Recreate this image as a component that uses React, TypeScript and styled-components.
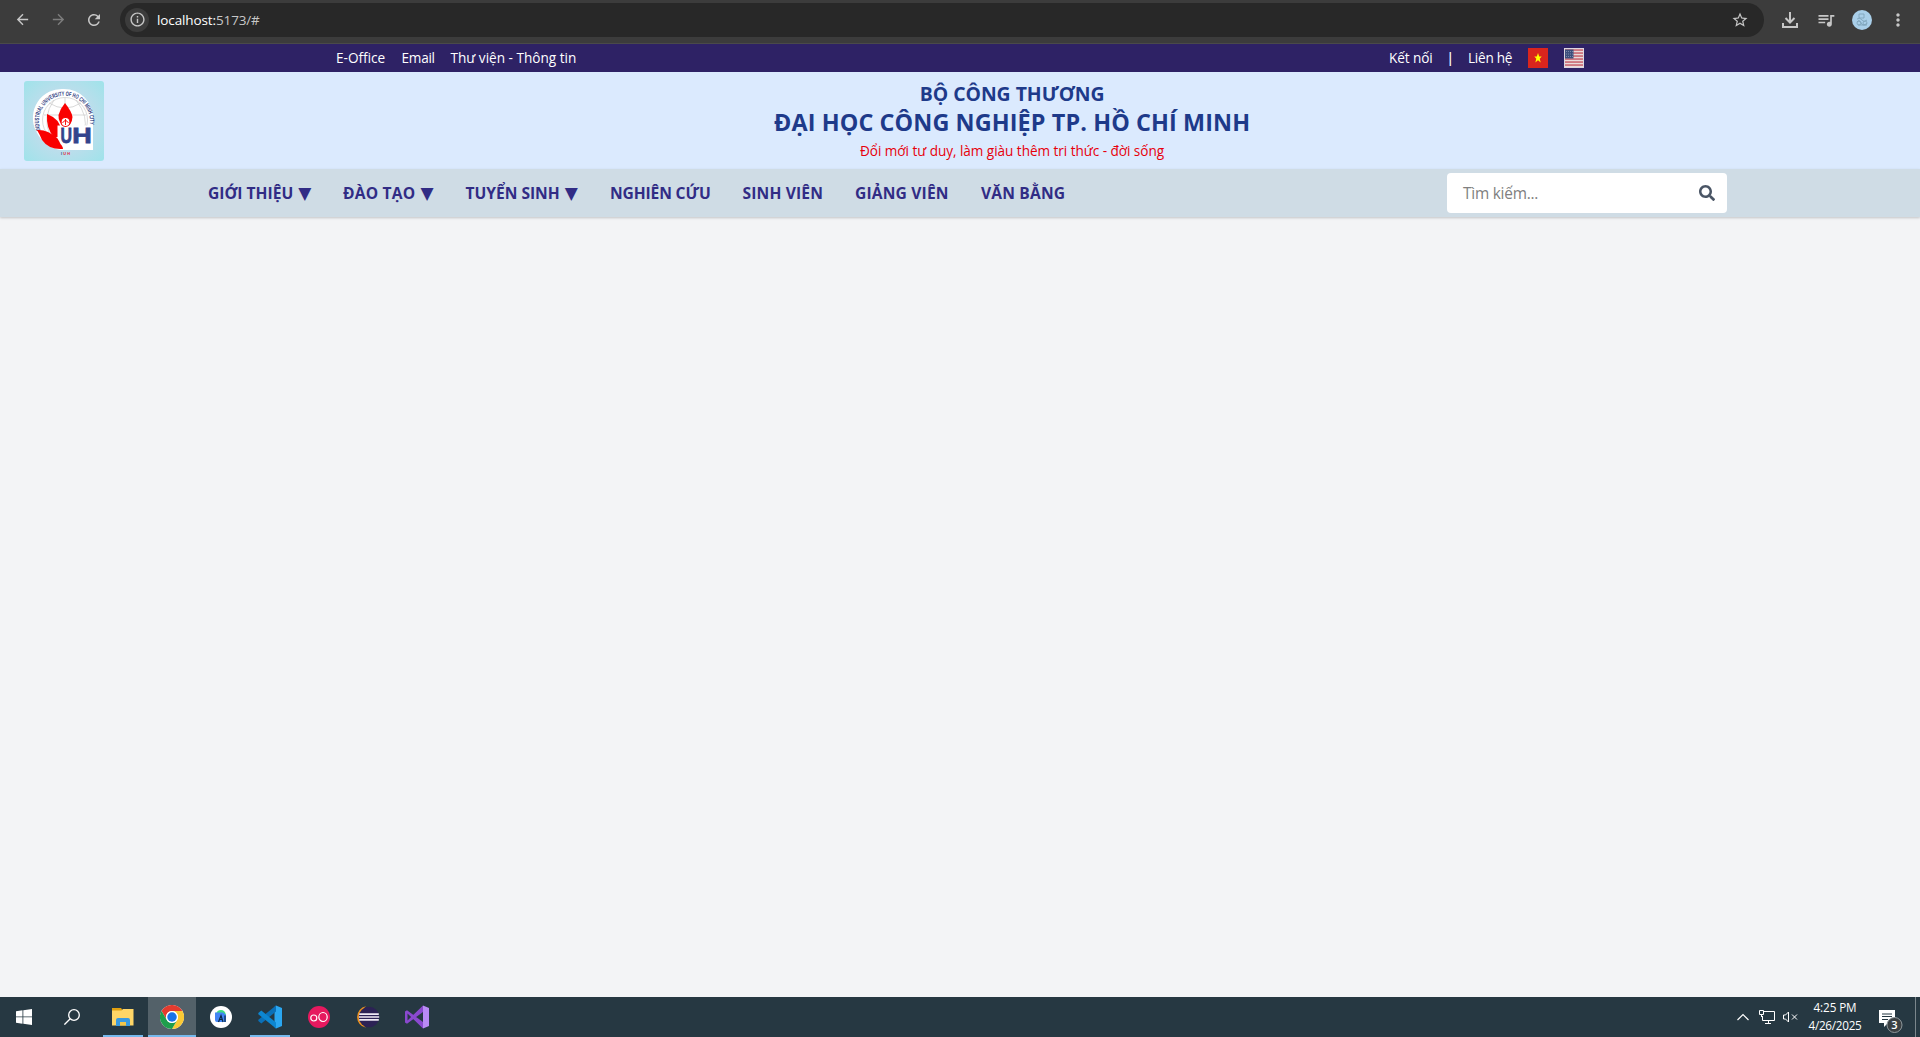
import React from 'react';
import styled, { createGlobalStyle, css } from 'styled-components';
import { MdArrowBack, MdArrowForward, MdRefresh, MdInfoOutline, MdStarOutline, MdQueueMusic, MdMoreVert } from 'react-icons/md';
import { FaSearch } from 'react-icons/fa';

const Global = createGlobalStyle`
  *, *::before, *::after { box-sizing: border-box; }
  body { margin: 0; background: #f3f4f6; font-family: "Open Sans", "Noto Sans", "DejaVu Sans", sans-serif; }
  svg { display: block; flex: none; }
  a { color: inherit; text-decoration: none; }
`;

const Screen = styled.div`
  display: flex;
  flex-direction: column;
  width: 1920px;
  height: 1037px;
  overflow: hidden;
`;

/* fixed-width text whose tracking is tuned per label */
const fitted = css<{ $w: number; $track?: number }>`
  display: block;
  width: ${p => p.$w}px;
  letter-spacing: ${p => p.$track ?? 0}px;
  white-space: nowrap;
`;

/* ---------- browser toolbar ---------- */
const Toolbar = styled.div`
  display: flex;
  align-items: center;
  height: 44px;
  flex: none;
  padding: 0 10px 4px 12px;
  background: #3c3c3c;
  border-bottom: 1px solid #4a4a4a;
  color: #c7c7c7;
`;
const ToolButton = styled.span<{ $dim?: boolean; $gap?: number }>`
  display: flex;
  align-items: center;
  justify-content: center;
  width: 20px;
  height: 20px;
  margin-right: ${p => p.$gap ?? 16}px;
  color: ${p => (p.$dim ? '#7d7d7d' : '#c7c7c7')};
`;
const AddressBar = styled.div`
  display: flex;
  align-items: center;
  width: 1644px;
  height: 34px;
  margin-right: 16px;
  padding: 0 14px 0 5px;
  border-radius: 17px;
  background: #282828;
`;
const SiteInfo = styled.span`
  display: flex;
  align-items: center;
  justify-content: center;
  width: 24px;
  height: 24px;
  border-radius: 12px;
  background: #3c3c3c;
`;
const Url = styled.div`
  display: flex;
  flex: 1;
  margin-left: 8px;
  font-size: 13.5px;
  line-height: 20px;
`;
const UrlPart = styled.span<{ $w: number; $track?: number; $muted?: boolean }>`
  ${fitted}
  color: ${p => (p.$muted ? '#c7c7c7' : '#ffffff')};
`;

/* ---------- site top bar ---------- */
const TopBar = styled.div`
  display: flex;
  justify-content: center;
  flex: none;
  height: 28px;
  background: #2e2265;
`;
const TopInner = styled.div`
  display: flex;
  align-items: center;
  justify-content: space-between;
  width: 1280px;
  padding: 0 16px;
`;
const TopGroup = styled.div`
  display: flex;
  align-items: center;
  gap: 16px;
`;
const TopLink = styled.a<{ $w: number; $track?: number }>`
  ${fitted}
  color: #ffffff;
  font-size: 13.6px;
  line-height: 20px;
`;
const Divider = styled(TopLink)`
  display: flex;
  justify-content: center;
  font-weight: 600;
`;

/* ---------- masthead ---------- */
const Masthead = styled.header`
  display: flex;
  flex: none;
  height: 97px;
  padding: 9px 0 8px 24px;
  background: #dbeafe;
`;
const Titles = styled.div`
  display: flex;
  flex: 1;
  flex-direction: column;
  align-items: center;
`;
const Ministry = styled.h2<{ $w: number; $track?: number }>`
  ${fitted}
  margin: 0;
  color: #1e3a8a;
  font-size: 19.4px;
  font-weight: 700;
  line-height: 26px;
`;
const School = styled.h1<{ $w: number; $track?: number }>`
  ${fitted}
  margin: 0;
  color: #1e3a8a;
  font-size: 23.4px;
  font-weight: 700;
  line-height: 30px;
`;
const Slogan = styled.p<{ $w: number; $track?: number }>`
  ${fitted}
  margin: 4px 0 0;
  color: #e7000b;
  font-size: 13.6px;
  line-height: 20px;
`;

/* ---------- navigation ---------- */
const NavBar = styled.nav`
  display: flex;
  justify-content: center;
  flex: none;
  position: relative;
  height: 48px;
  background: #cfdce5;
  box-shadow: 0 1px 3px rgba(0, 0, 0, 0.1), 0 1px 2px rgba(0, 0, 0, 0.1);
`;
const NavInner = styled.div`
  display: flex;
  align-items: center;
  justify-content: space-between;
  width: 1536px;
  padding: 0 1px 0 16px;
`;
const Menu = styled.div`
  display: flex;
  gap: 32px;
`;
const MenuLink = styled.a<{ $w: number; $track?: number }>`
  ${fitted}
  height: 24px;
  color: #312c85;
  font-size: 15.6px;
  font-weight: 700;
  line-height: 24px;
`;
const Arrow = styled.span`
  margin-left: 1px;
  font-size: 17px;
  line-height: 1;
  letter-spacing: 0;
`;
const SearchBox = styled.div`
  display: flex;
  align-items: center;
  justify-content: space-between;
  width: 280px;
  height: 40px;
  padding: 0 12px 0 16px;
  border-radius: 4px;
  background: #ffffff;
  color: #4a5565;
`;
const Placeholder = styled.span<{ $w: number; $track?: number }>`
  ${fitted}
  padding-top: 2px;
  color: #808080;
  font-size: 15.4px;
  line-height: 24px;
`;

const Page = styled.main`
  flex: 1;
  background: #f3f4f6;
`;

/* ---------- taskbar ---------- */
const Taskbar = styled.footer`
  display: flex;
  flex: none;
  height: 40px;
  background: #263842;
`;
const TaskButton = styled.span<{ $active?: boolean; $open?: boolean; $gap?: number }>`
  display: flex;
  align-items: center;
  justify-content: center;
  width: 48px;
  height: 40px;
  margin-right: ${p => p.$gap ?? 1}px;
  background: ${p =>
    p.$active
      ? 'linear-gradient(#76b9ed, #76b9ed) bottom / 48px 2px no-repeat, #536169'
      : p.$open
      ? 'linear-gradient(#76b9ed, #76b9ed) bottom / 40px 2px no-repeat'
      : 'none'};
`;
const Tray = styled.div`
  display: flex;
  align-items: center;
  margin-left: auto;
  color: #ffffff;
`;
const TrayIcon = styled.span<{ $gap: number; $drop?: number }>`
  display: flex;
  margin-top: ${p => p.$drop ?? 0}px;
  margin-right: ${p => p.$gap}px;
`;
const Clock = styled.div`
  display: flex;
  flex-direction: column;
  align-items: center;
  width: 54px;
  margin: -2px 17px 0 0;
`;
const ClockLine = styled.span<{ $w: number; $track?: number }>`
  ${fitted}
  color: #ffffff;
  font-size: 11.7px;
  line-height: 18px;
`;
const DesktopEdge = styled.span`
  width: 5px;
  height: 40px;
  border-left: 1px solid #7b868c;
`;

const menu = [
  { text: 'GIỚI THIỆU', w: 103, track: 0, drop: true },
  { text: 'ĐÀO TẠO', w: 90.5, track: 0.18, drop: true },
  { text: 'TUYỂN SINH', w: 112.5, track: -0.02, drop: true },
  { text: 'NGHIÊN CỨU', w: 100.5, track: -0.13 },
  { text: 'SINH VIÊN', w: 80.5, track: 0.15 },
  { text: 'GIẢNG VIÊN', w: 94, track: 0.17 },
  { text: 'VĂN BẰNG', w: 84, track: 0.17 },
];

const UniversityLogo = () => (
  <svg width="80" height="80" viewBox="0 0 80 80">
    <defs>
      <radialGradient id="sky" cx="0.5" cy="0.5" r="0.7">
        <stop offset="0.4" stopColor="#c4dcec" />
        <stop offset="1" stopColor="#9fe3ea" />
      </radialGradient>
      <path id="ring" d="M16.5 49 A25.5 25.5 0 1 1 65.5 45" />
    </defs>
    <rect width="80" height="80" rx="3" fill="url(#sky)" />
    <path d="M40 8 A29 29 0 0 1 69 38 V69 H36 Q20 66 12 50 A29 29 0 0 1 40 8Z" fill="#fff" />
    <g fill="none" stroke="#c9c9c9" strokeWidth="0.7">
      <circle cx="41" cy="39" r="22.5" />
      <path d="M41 17V39M20 34H62M25 22Q41 32 57 22M30 19Q18 36 26 54M52 19Q65 36 60 50" />
    </g>
    <text fontFamily="Liberation Sans, Arial, sans-serif" fontSize="6.2" fontWeight="700" fill="#30407f" textLength="92" lengthAdjust="spacingAndGlyphs">
      <textPath href="#ring" textLength="92" lengthAdjust="spacingAndGlyphs">INDUSTRIAL UNIVERSITY OF HO CHI MINH CITY</textPath>
    </text>
    <path d="M41 22Q48 31 48.500 36Q48 44 41.500 46Q34 42 34.500 34Q36 28 41 22Z" fill="#f90000" />
    <path d="M23 33Q36 38 37 49Q36 58 30 56Q22 48 23 33Z" fill="#f90000" />
    <path d="M13 49Q23 48 33 57L38 62L39 68Q25 69 18 59Q16 54 13 49Z" fill="#f90000" />
    <path d="M33.500 44.500H69V69H42Q35 63 33.500 56Z" fill="#fff" />
    <circle cx="41.500" cy="41" r="4.500" fill="#fff" stroke="#f90000" strokeWidth="1.200" />
    <path d="M38.500 42Q41.500 37 44.500 42M41.500 38V44" fill="none" stroke="#f90000" strokeWidth="0.900" />
    <g fontFamily="Liberation Sans, Arial, sans-serif" fontSize="22.500" fontWeight="700" fill="#34438c" stroke="#34438c" strokeWidth="0.800">
      <text x="36.500" y="62.300" textLength="11.500" lengthAdjust="spacingAndGlyphs">U</text>
      <text x="48.200" y="62.300" textLength="19.500" lengthAdjust="spacingAndGlyphs">H</text>
    </g>
    <text x="37" y="74" fontFamily="Liberation Sans, Arial, sans-serif" fontSize="3.800" fontWeight="700" fill="#e02038" textLength="9"><tspan fill="#34438c">I</tspan>UH</text>
  </svg>
);

const VietnamFlag = () => (
  <svg width="20" height="20" viewBox="0 0 20 20">
    <rect width="20" height="20" fill="#da251d" />
    <path d="M10 5l1.200 3.600h2.500l-2 2.200 1 3.700-2.700-2.200-2.700 2.200 1-3.700-2-2.200h2.500z" fill="#ff0" />
  </svg>
);

const UsaFlag = () => (
  <svg width="20" height="20" viewBox="0 0 20 20">
    <rect width="20" height="20" fill="#eadada" />
    {[1, 4, 7, 10, 13, 16].map(y => (
      <rect key={y} x="1" y={y + 0.3} width="18.500" height="1.500" fill="#c8606c" />
    ))}
    <rect x="1" y="1.500" width="8.500" height="9" fill="#3d4f7c" />
    <path d="M2 3.500H9M2 6H9M2 8.500H9" stroke="#8b97b5" strokeWidth="0.800" strokeDasharray="1 1" />
    <rect x="0.500" y="0.500" width="19" height="19" fill="none" stroke="#ddd6df" />
  </svg>
);

const DownloadIcon = () => (
  <svg width="16" height="16" viewBox="0 0 16 16" fill="none" stroke="currentColor" strokeWidth="2">
    <path d="M8 0V10M3.500 6L8 10.500L12.500 6M1 11V15H15V11" />
  </svg>
);

const Avatar = () => (
  <svg width="20" height="20" viewBox="0 0 20 20">
    <circle cx="10" cy="10" r="10" fill="#a9cfe9" />
    <g fill="none" stroke="#7fa5bb" strokeWidth="0.900">
      <path d="M7 4H12V8H7ZM5 9Q8 7 10 10T15 10M5 12Q7 9 9 13T15 13M6 15H15" />
      <circle cx="7" cy="13" r="2" />
      <circle cx="13" cy="13" r="2" />
    </g>
  </svg>
);

const StartIcon = () => (
  <svg width="16" height="16" viewBox="0 0 16 16" fill="#fff">
    <path d="M0 2.200L6.500 1.300V7.500H0ZM7.300 1.200L16 0V7.500H7.300ZM0 8.300H6.500V14.700L0 13.800ZM7.300 8.300H16V16L7.300 14.800Z" />
  </svg>
);

const FindIcon = () => (
  <svg width="16" height="16" viewBox="0 0 16 16" fill="none" stroke="#fff" strokeWidth="1.300">
    <circle cx="10" cy="6" r="5.300" />
    <path d="M6.200 9.800L0.400 15.600" />
  </svg>
);

const FolderIcon = () => (
  <svg width="22" height="20" viewBox="0 0 22 20">
    <path d="M0 1H9L10.500 3V5H0Z" fill="#e0a010" />
    <path d="M0 3.500H9.500L11 2H21.500V18.500H0Z" fill="#ffd667" />
    <path d="M4 19V13Q4 11 6 11H16Q18 11 18 13V19H14V15H8V19Z" fill="#3a9ae0" />
    <path d="M8 15H14V18.500H8Z" fill="#f3c64b" />
  </svg>
);

const ChromeIcon = () => (
  <svg width="24" height="24" viewBox="0 0 48 48">
    <circle cx="24" cy="24" r="24" fill="#fff" />
    <path d="M3.200 12A24 24 0 0 1 44.800 12H24A12 12 0 0 0 13.600 30Z" fill="#e33b2e" />
    <path d="M44.800 12A24 24 0 0 1 24 48L34.400 30A12 12 0 0 0 24 12Z" fill="#fcc934" />
    <path d="M24 48A24 24 0 0 1 3.200 12L13.600 30A12 12 0 0 0 34.400 30Z" fill="#1e9e4c" />
    <circle cx="24" cy="24" r="12" fill="#fff" />
    <circle cx="24" cy="24" r="9.500" fill="#1a73e8" />
  </svg>
);

const StudioIcon = () => (
  <svg width="22" height="22" viewBox="0 0 22 22">
    <circle cx="11" cy="11" r="11" fill="#fff" />
    <path d="M6 8Q7 4 11 4Q15 4 16 9H9Z" fill="#3ddc84" />
    <path d="M5 6.500H13L16 9V16H7Q5 16 5 14Z" fill="#4285f4" />
    <path d="M8.500 16L11 9.500L13 16M9.500 13.500H12.500M15 9.500V16" stroke="#0b2b45" strokeWidth="1.200" fill="none" />
  </svg>
);

const CodeIcon = () => (
  <svg width="24" height="24" viewBox="0 0 24 24">
    <path d="M18 0.500L24 3V21L18 23.500L16.500 22V2Z" fill="#2aa7f2" />
    <path d="M18 0.500V6.500L3.300 18.500L0.300 16V14.800Z" fill="#0a70b8" />
    <path d="M18 23.500V17.500L3.300 5.500L0.300 8V9.200Z" fill="#0d86d1" />
  </svg>
);

const CircleAppIcon = () => (
  <svg width="22" height="22" viewBox="0 0 22 22">
    <circle cx="11" cy="11" r="11" fill="#e6195f" />
    <g fill="none" stroke="#fff" strokeWidth="1.200">
      <circle cx="5.800" cy="12" r="3" />
      <ellipse cx="15" cy="11" rx="4.200" ry="4.500" />
    </g>
  </svg>
);

const EclipseIcon = () => (
  <svg width="24" height="22" viewBox="0 0 24 22">
    <path d="M10 0.200A11 11 0 0 0 10 21.800Q5 18 5 11Q5 4 10 0.200Z" fill="#f0941e" />
    <circle cx="13" cy="11" r="10.300" fill="#2c2255" />
    <path d="M3.200 8.200H22.800M2.800 11H23.200M3.200 13.800H22.800" stroke="#efeaf5" strokeWidth="1.700" />
  </svg>
);

const VisualStudioIcon = () => (
  <svg width="24" height="24" viewBox="0 0 24 24">
    <path d="M0 6.500L2 5.300L18 17V23.500L2.500 8.500V15.500L18 0.500V7L2 18.700L0 17.500Z" fill="#8a49cf" />
    <path d="M18 0.500L24 3V21L18 23.500Z" fill="#b98af5" />
  </svg>
);

const ChevronIcon = () => (
  <svg width="12" height="8" viewBox="0 0 12 8" fill="none" stroke="currentColor" strokeWidth="1.200">
    <path d="M0.500 7L6 1.500L11.500 7" />
  </svg>
);

const NetworkIcon = () => (
  <svg width="16" height="14" viewBox="0 0 16 14" fill="none" stroke="currentColor">
    <path d="M5 1.500H15.500V10.500H3.500V6M9.500 10.500V13M6 13.500H12M0.500 0.500H4.500V4.500H0.500ZM2.500 4.500V7" />
  </svg>
);

const MutedIcon = () => (
  <svg width="15" height="12" viewBox="0 0 15 12" fill="none" stroke="currentColor">
    <path d="M0.500 4V8H2.500L5.500 11V1L2.500 4ZM9 3.500L14 8.500M14 3.500L9 8.500" />
  </svg>
);

const ActionCenterIcon = () => (
  <svg width="26" height="26" viewBox="0 0 26 26">
    <path d="M0 3H16V16H9L5 20V16H0Z" fill="#fff" />
    <path d="M3 7H13M3 9.500H13M3 12.500H9" stroke="#263842" />
    <circle cx="15.500" cy="18" r="7.500" fill="#3a3f42" stroke="#8f989c" />
    <text x="15.500" y="22" textAnchor="middle" fontFamily="Open Sans, sans-serif" fontSize="11" fontWeight="600" fill="#fff">3</text>
  </svg>
);

export default function App() {
  return (
    <Screen>
      <Global />
      <Toolbar>
        <ToolButton><MdArrowBack size={17} /></ToolButton>
        <ToolButton $dim><MdArrowForward size={17} /></ToolButton>
        <ToolButton><MdRefresh size={18} /></ToolButton>
        <AddressBar>
          <SiteInfo><MdInfoOutline size={17} /></SiteInfo>
          <Url>
            <UrlPart $w={59} $track={-0.11}>localhost:</UrlPart>
            <UrlPart $w={44} $track={-0.15} $muted>5173/#</UrlPart>
          </Url>
          <ToolButton $gap={0}><MdStarOutline size={18} /></ToolButton>
        </AddressBar>
        <ToolButton $gap={16}><DownloadIcon /></ToolButton>
        <ToolButton><MdQueueMusic size={20} /></ToolButton>
        <ToolButton><Avatar /></ToolButton>
        <ToolButton $gap={0}><MdMoreVert size={20} /></ToolButton>
      </Toolbar>
      <TopBar>
        <TopInner>
          <TopGroup>
            <TopLink href="#" $w={49.5}>E-Office</TopLink>
            <TopLink href="#" $w={33} $track={-0.25}>Email</TopLink>
            <TopLink href="#" $w={126}>Thư viện - Thông tin</TopLink>
          </TopGroup>
          <TopGroup>
            <TopLink href="#" $w={43.5} $track={-0.08}>Kết nối</TopLink>
            <Divider as="span" $w={3.5}>|</Divider>
            <TopLink href="#" $w={44} $track={-0.25}>Liên hệ</TopLink>
            <VietnamFlag />
            <UsaFlag />
          </TopGroup>
        </TopInner>
      </TopBar>
      <Masthead>
        <UniversityLogo />
        <Titles>
          <Ministry $w={184.5} $track={-0.03}>BỘ CÔNG THƯƠNG</Ministry>
          <School $w={476} $track={0.1}>ĐẠI HỌC CÔNG NGHIỆP TP. HỒ CHÍ MINH</School>
          <Slogan $w={304} $track={-0.05}>Đổi mới tư duy, làm giàu thêm tri thức - đời sống</Slogan>
        </Titles>
      </Masthead>
      <NavBar>
        <NavInner>
          <Menu>
            {menu.map(m => (
              <MenuLink key={m.text} href="#" $w={m.w} $track={m.track}>
                {m.text}
                {m.drop && <>{' '}<Arrow>▼</Arrow></>}
              </MenuLink>
            ))}
          </Menu>
          <SearchBox>
            <Placeholder $w={75} $track={-0.22}>Tìm kiếm...</Placeholder>
            <FaSearch size={16} />
          </SearchBox>
        </NavInner>
      </NavBar>
      <Page />
      <Taskbar>
        <TaskButton $gap={0}><StartIcon /></TaskButton>
        <TaskButton $gap={3}><FindIcon /></TaskButton>
        <TaskButton $open><FolderIcon /></TaskButton>
        <TaskButton $active><ChromeIcon /></TaskButton>
        <TaskButton><StudioIcon /></TaskButton>
        <TaskButton $open><CodeIcon /></TaskButton>
        <TaskButton><CircleAppIcon /></TaskButton>
        <TaskButton><EclipseIcon /></TaskButton>
        <TaskButton><VisualStudioIcon /></TaskButton>
        <Tray>
          <TrayIcon $gap={10}><ChevronIcon /></TrayIcon>
          <TrayIcon $gap={8}><NetworkIcon /></TrayIcon>
          <TrayIcon $gap={10}><MutedIcon /></TrayIcon>
          <Clock>
            <ClockLine $w={43} $track={-0.1}>4:25 PM</ClockLine>
            <ClockLine $w={53} $track={-0.26}>4/26/2025</ClockLine>
          </Clock>
          <TrayIcon $gap={10} $drop={6}><ActionCenterIcon /></TrayIcon>
          <DesktopEdge />
        </Tray>
      </Taskbar>
    </Screen>
  );
}
